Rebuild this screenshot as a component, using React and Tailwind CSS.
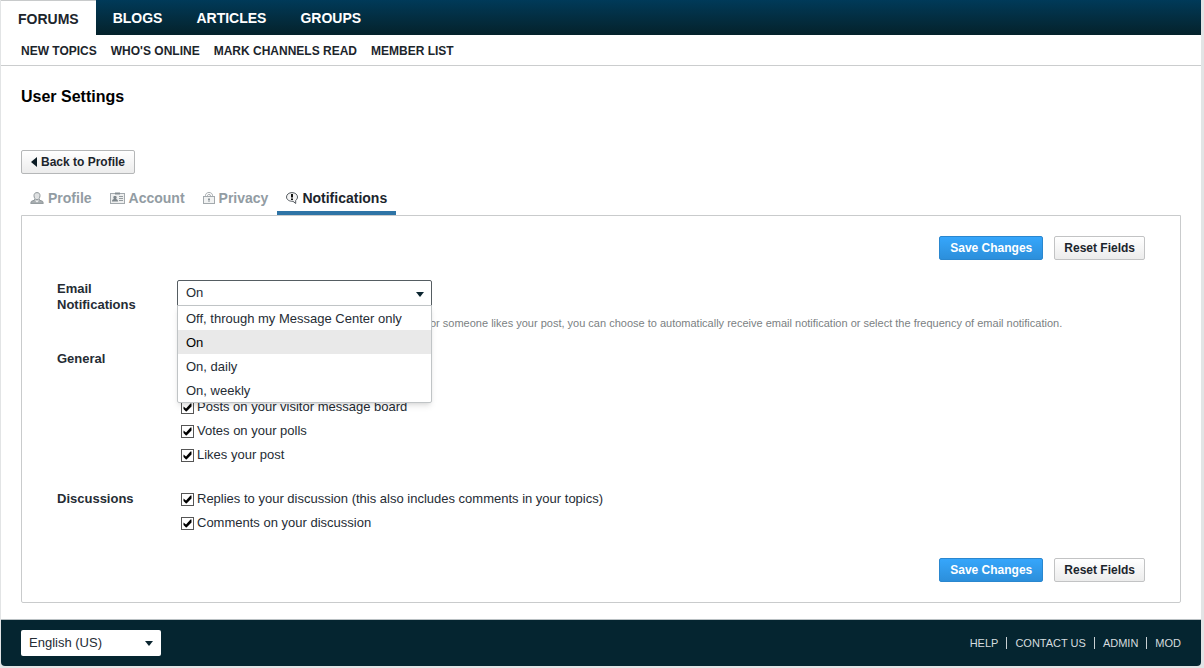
import { useState } from "react";

const mainLinks = ["Blogs", "Articles", "Groups"];
const subLinks = ["New Topics", "Who's Online", "Mark Channels Read", "Member List"];
const footerLinks = ["Help", "Contact Us", "Admin", "MOD"];
const emailOptions = ["Off, through my Message Center only", "On", "On, daily", "On, weekly"];

const generalItems = [
  "Posts on your visitor message board",
  "Votes on your polls",
  "Likes your post",
];

const discussionItems = [
  "Replies to your discussion (this also includes comments in your topics)",
  "Comments on your discussion",
];

function ProfileIcon() {
  return (
    <svg className="h-3 w-[14px]" viewBox="0 0 14 12" fill="none" stroke="#8f969a" aria-hidden="true">
      <path d="M4.500 7.200v1L1.400 9.300.7 11.400h12.600l-.7-2.100-3.100-1.100v-1" fill="#aab0b3" />
      <path d="M7 .6c2 0 3 1.200 3 3.100S8.700 7.800 7 7.800 4 5.600 4 3.700 5 .6 7 .6Z" fill="#dfe1e2" />
      <path d="m5 8.500 2 2 2-2Z" fill="#f6f6f6" stroke="none" />
    </svg>
  );
}

function AccountIcon() {
  return (
    <svg className="h-3 w-[15px]" viewBox="0 0 15 12" fill="none" stroke="#a3a9ad" aria-hidden="true">
      <rect x=".5" y="1.500" width="14" height="10" fill="#eeefef" />
      <path d="M5 1.500h5" stroke="#868e93" strokeWidth="2" />
      <path d="M2 9.500h6c0-1.500-.8-2-2-2.400C6.500 6.600 6.700 6 6.700 5.300 6.700 4.400 6 4 5 4s-1.700.4-1.700 1.300c0 .7.2 1.300.7 1.800-1.200.4-2 .9-2 2.400Z" fill="#7d868b" stroke="none" />
      <path d="M9 4.500h4M9 6.500h4M9 8.500h4" stroke="#949b9f" />
    </svg>
  );
}

function PrivacyIcon() {
  return (
    <svg className="h-3 w-3" viewBox="0 0 12 12" fill="none" stroke="#a3a9ad" aria-hidden="true">
      <path d="M2.500 4.500V3.500C2.500 1.700 4 .5 6 .5s3.500 1.200 3.500 3v1M4.500 4.500V3.700c0-.8.6-1.200 1.500-1.200s1.500.4 1.500 1.200v.8" />
      <rect x=".5" y="4.500" width="11" height="7" fill="#f1f2f2" />
      <path d="M6 6v4M5 7.500h2" stroke="#8b9499" />
    </svg>
  );
}

function NotificationsIcon() {
  return (
    <svg className="h-3 w-3" viewBox="0 0 12 12" fill="none" stroke="#555b60" aria-hidden="true">
      <path d="M6 .6C9 .6 11.500 2.400 11.500 5c0 1.500-.8 2.700-1.800 3.400v3.100L7 9.300C3.300 9.500.5 7.700.5 5 .5 2.400 3 .6 6 .6Z" fill="#f4f4f4" />
      <path d="M6 2v3.500M6 6.500V8" stroke="#111" strokeWidth="2" />
    </svg>
  );
}

function Caret({ className }) {
  return (
    <svg className={`pointer-events-none absolute h-[5px] w-2 ${className}`} viewBox="0 0 8 5" aria-hidden="true">
      <path d="M0 0h8L4 5Z" fill="#0b2530" />
    </svg>
  );
}

const tabs = [
  { label: "Profile", Icon: ProfileIcon },
  { label: "Account", Icon: AccountIcon },
  { label: "Privacy", Icon: PrivacyIcon },
  { label: "Notifications", Icon: NotificationsIcon },
];

function FormButtons() {
  return (
    <div className="flex justify-end gap-[11px] text-xs font-bold">
      <button type="submit" className="h-6 rounded-xs border border-[#2a87cf] bg-linear-to-b from-[#36a6fb] to-[#2c8fdb] px-[10px] text-white">
        Save Changes
      </button>
      <button type="reset" className="h-6 rounded-xs border border-[#c2c3c4] bg-linear-to-b from-white to-[#ececec] px-[9px] text-[#1c252c]">
        Reset Fields
      </button>
    </div>
  );
}

function CheckRow({ label }) {
  const [checked, setChecked] = useState(true);

  return (
    <label className="flex h-6 items-center gap-[3px]">
      <span className="relative flex">
        <input
          type="checkbox"
          checked={checked}
          onChange={(e) => setChecked(e.target.checked)}
          className="size-[13px] appearance-none border border-[#555] bg-white"
        />
        {checked && (
          <svg className="pointer-events-none absolute inset-0 size-[13px]" viewBox="0 0 13 13" aria-hidden="true">
            <path d="M2.500 5.500 5 7.500l4.500-5h1v3l-5 5H5l-2.500-2.500Z" fill="#000" />
          </svg>
        )}
      </span>
      {label}
    </label>
  );
}

function EmailSelect() {
  const [value, setValue] = useState("On");
  const [open, setOpen] = useState(true);

  return (
    <div className="relative w-[255px]">
      <select
        id="email"
        value={value}
        onChange={(e) => setValue(e.target.value)}
        className="block h-[26px] w-full appearance-none rounded-t-xs border border-[#555d62] bg-white px-2"
      >
        {emailOptions.map((option) => (
          <option key={option}>{option}</option>
        ))}
      </select>
      <Caret className="top-3 right-2" />
      {open && (
        <ul role="listbox" aria-label="Email Notifications" className="absolute inset-x-0 top-[25px] z-10 rounded-b-xs border border-[#c0c4c6] bg-white shadow-md">
          {emailOptions.map((option) => (
            <li
              key={option}
              role="option"
              aria-selected={option === value}
              onClick={() => {
                setValue(option);
                setOpen(false);
              }}
              className="h-6 px-2 pt-px leading-6 aria-selected:bg-[#e9e9e9] aria-selected:text-black"
            >
              {option}
            </li>
          ))}
        </ul>
      )}
    </div>
  );
}

export default function App() {
  return (
    <div className="flex min-h-screen flex-col bg-[#e2e4e5] pr-[3px] pb-0.5 pl-px font-['Liberation_Sans',Arial,sans-serif] text-[13px] text-[#252c34]">
      <div className="flex flex-1 flex-col overflow-hidden rounded-b-sm bg-white">
        <header>
          <nav className="flex h-[35px] bg-linear-to-b from-[#003a59] to-[#04222b] text-sm font-bold text-white uppercase">
            <a href="#forums" className="border-t border-[#c8cacb] bg-white px-[17px] pt-2 text-[#1c252c]">Forums</a>
            {mainLinks.map((link) => (
              <a key={link} href="#section" className="px-[17px] pt-2">{link}</a>
            ))}
          </nav>
          <nav className="flex h-[31px] items-center gap-[14px] border-b border-[#cbcdce] px-5 pt-0.5 text-xs font-bold text-[#1c252c] uppercase">
            {subLinks.map((link) => (
              <a key={link} href="#topics">{link}</a>
            ))}
          </nav>
        </header>

        <main className="flex-1 px-5 pt-[19px] pb-4">
          <h1 className="text-base font-bold text-black">User Settings</h1>

          <a href="#profile" className="mt-[41px] flex h-6 w-fit items-center gap-1 rounded-xs border border-[#b5b7b8] bg-linear-to-b from-white to-[#ececec] px-[9px] text-xs font-bold text-[#1c252c]">
            <svg className="h-[10px] w-[6px]" viewBox="0 0 6 10" aria-hidden="true">
              <path d="M6 0v10L0 5Z" fill="#0b1c24" />
            </svg>
            Back to Profile
          </a>

          <div className="mt-2 flex text-sm font-bold">
            {tabs.map(({ label, Icon }) => (
              <a
                key={label}
                href="#settings"
                aria-current={label === "Notifications" ? "page" : undefined}
                className="flex h-[33px] items-center gap-1 border-b-4 border-transparent px-[9px] pt-0.5 text-[#929ca3] aria-[current]:border-[#2e74a6] aria-[current]:text-[#1c252c]"
              >
                <Icon />
                {label}
              </a>
            ))}
          </div>

          <form className="rounded-b-xs border border-[#c9cbcc] px-[35px] py-5" onSubmit={(e) => e.preventDefault()}>
            <FormButtons />

            <div className="mt-5 flex">
              <label htmlFor="email" className="w-[120px] shrink-0 pt-px pr-8 leading-4 font-bold">Email Notifications</label>
              <div className="min-w-0 flex-1">
                <EmailSelect />
                <p className="mt-[9px] pl-[253px] text-[11px] leading-4 whitespace-nowrap text-[#7b7f83]">
                  or someone likes your post, you can choose to automatically receive email notification or select the frequency of email notification.
                </p>
              </div>
            </div>

            <fieldset className="mt-4 flex" aria-labelledby="general">
              <div id="general" className="w-[120px] shrink-0 leading-6 font-bold">General</div>
              <div className="pt-12 pl-1">
                {generalItems.map((item) => (
                  <CheckRow key={item} label={item} />
                ))}
              </div>
            </fieldset>

            <fieldset className="mt-5 flex" aria-labelledby="discussions">
              <div id="discussions" className="w-[120px] shrink-0 leading-6 font-bold">Discussions</div>
              <div className="pl-1">
                {discussionItems.map((item) => (
                  <CheckRow key={item} label={item} />
                ))}
              </div>
            </fieldset>

            <div className="mt-[23px]">
              <FormButtons />
            </div>
          </form>
        </main>

        <footer className="flex h-[47px] items-center justify-between border-t border-[#b9c0c3] bg-[#052530] px-5 text-white">
          <div className="relative">
            <select aria-label="Language" className="block h-[26px] w-[140px] appearance-none rounded-xs bg-white px-2 text-[#252c34]">
              <option>English (US)</option>
            </select>
            <Caret className="top-[11px] right-2" />
          </div>
          <nav className="flex divide-x divide-[#c8d0d3] text-[11px] leading-3 text-[#d5dcdf] uppercase">
            {footerLinks.map((link) => (
              <a key={link} href="#footer" className="px-2 last:pr-0">{link}</a>
            ))}
          </nav>
        </footer>
      </div>
    </div>
  );
}
